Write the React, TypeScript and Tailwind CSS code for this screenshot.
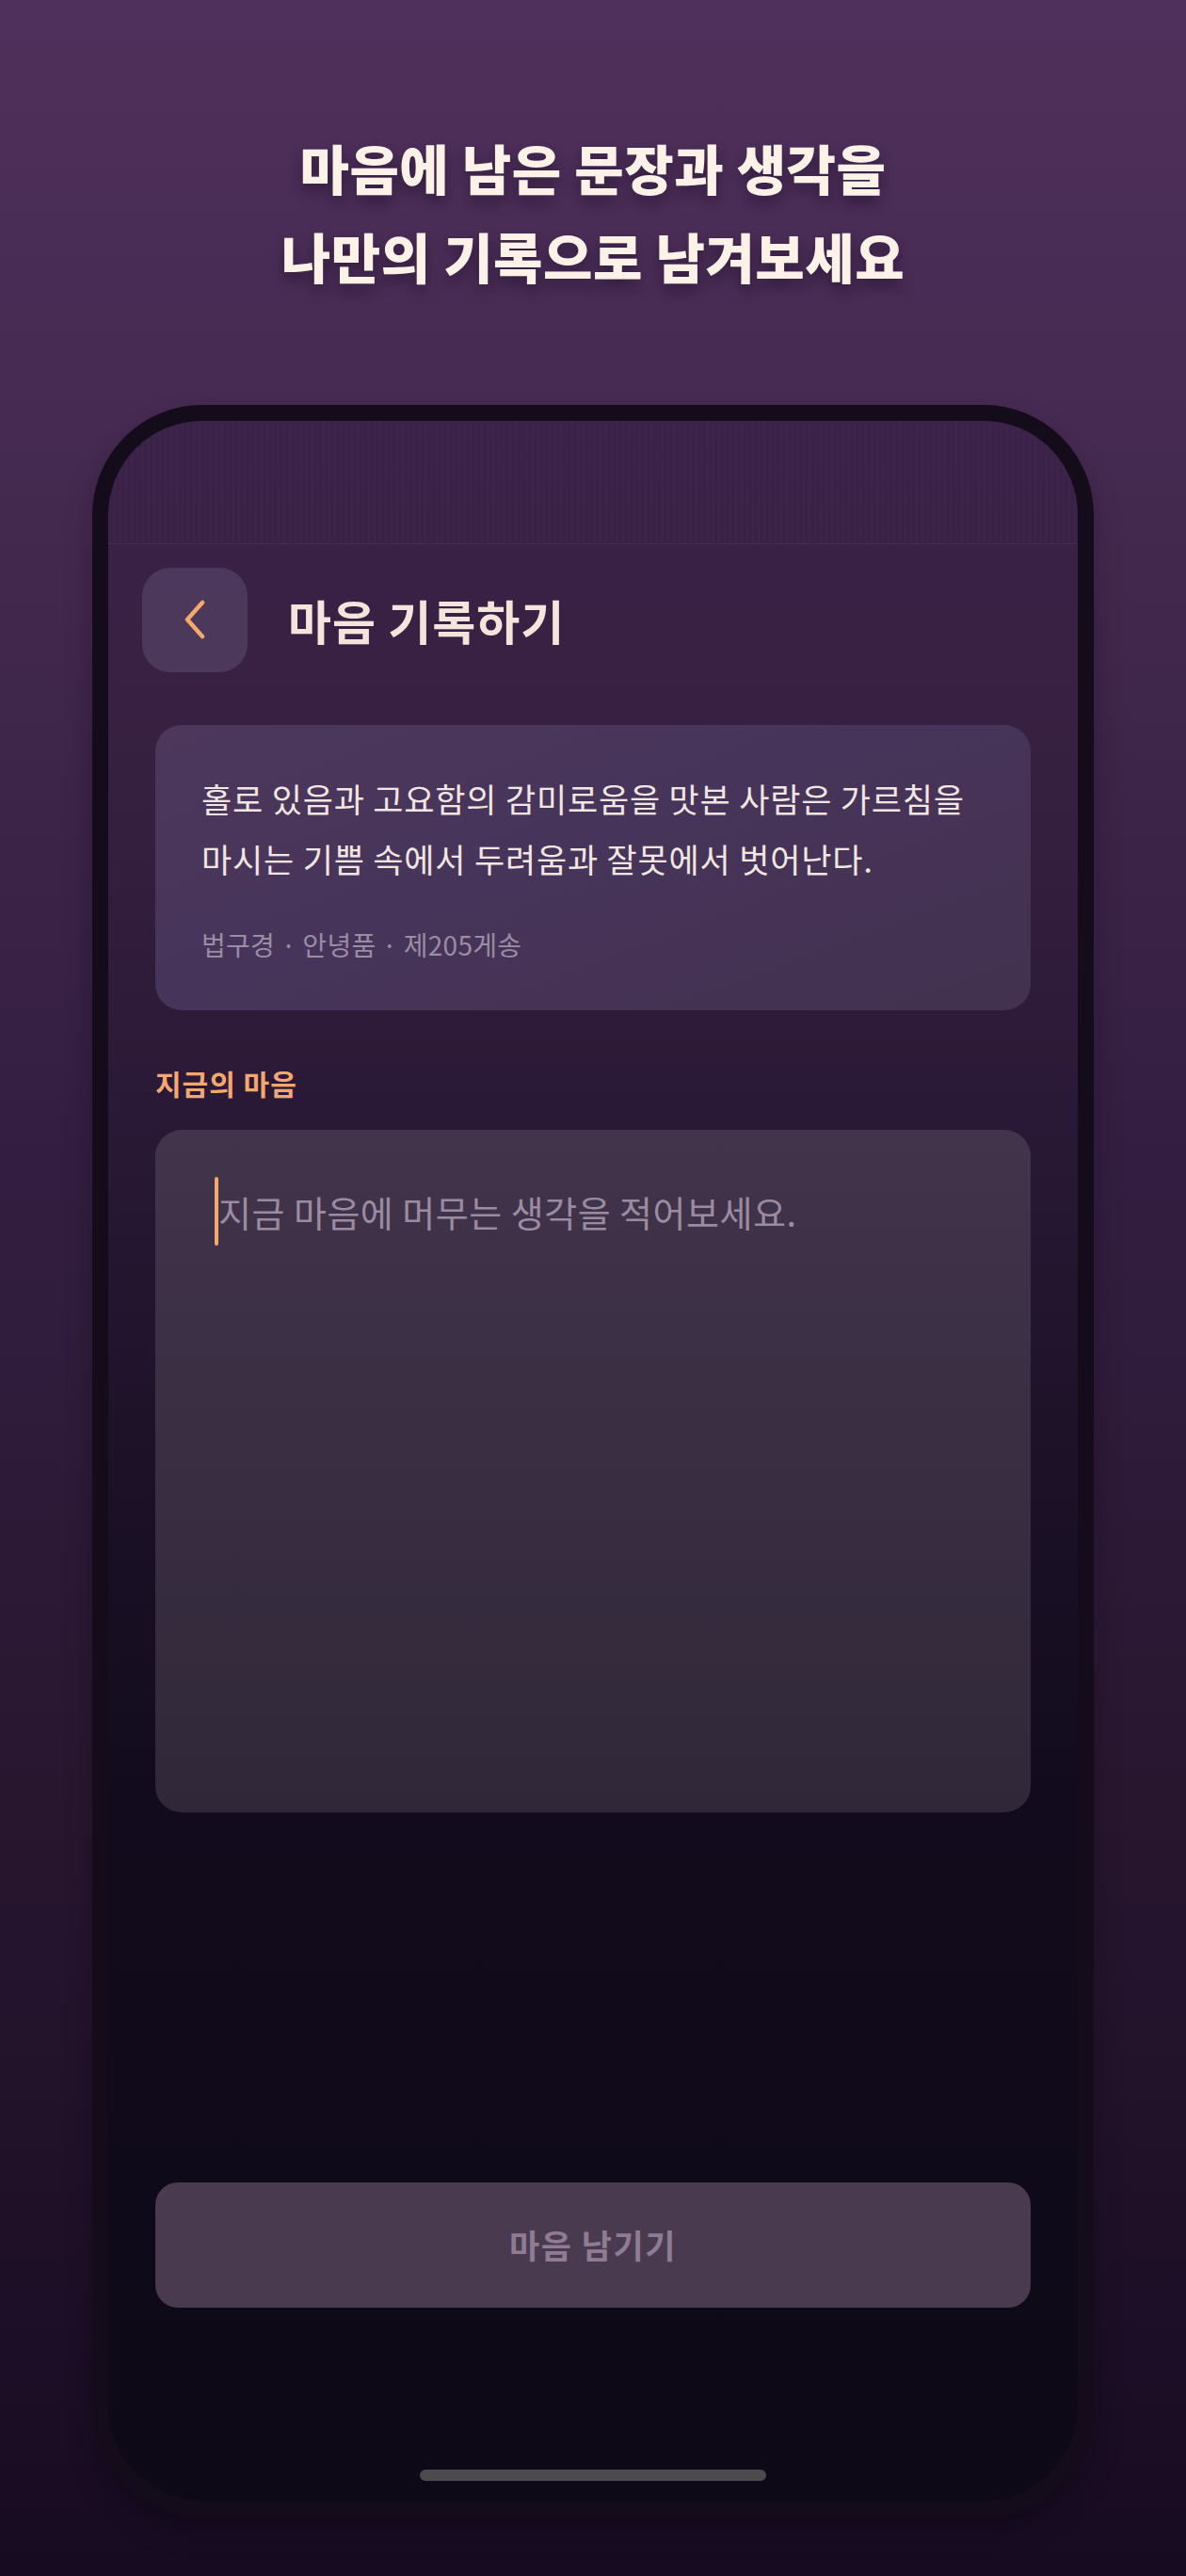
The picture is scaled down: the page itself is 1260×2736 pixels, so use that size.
import React from 'react';

const KR = 'font-["Noto_Sans_CJK_KR","Noto_Sans",sans-serif]';

const BackButton = () => (
  <button
    className="w-[112px] h-[111px] rounded-[30px] bg-[#4f3b5e]/90 flex items-center justify-center shrink-0"
    aria-label="뒤로"
  >
    <svg width="26" height="42" viewBox="0 0 26 42" fill="none">
      <path d="M21 3L5 21L21 39" stroke="#f5a86c" strokeWidth="4.5" strokeLinecap="round" strokeLinejoin="round" />
    </svg>
  </button>
);

export default function App() {
  return (
    <div
      className={`${KR} w-full min-h-[2736px] flex flex-col items-center bg-[linear-gradient(180deg,#4f305c_0%,#44294f_20%,#331e41_45%,#28162f_70%,#170b22_100%)]`}
    >
      {/* Headline */}
      <h1 className="pt-[130px] text-center text-[57px] leading-[94px] font-black tracking-[0.5px] text-[#fdf1e8] [text-shadow:0_8px_14px_rgba(20,8,30,0.45)]">
        마음에 남은 문장과 생각을
        <br />
        나만의 기록으로 남겨보세요
      </h1>

      {/* Phone */}
      <div className="mt-[112px] w-[1064px] h-[2243px] rounded-[117px] bg-[#150c1b] p-[17px] shadow-[0_16px_30px_rgba(0,0,0,0.25)]">
        <div className="w-full h-full rounded-[100px] overflow-hidden flex flex-col bg-[linear-gradient(180deg,#3b2249_0%,#36203f_18%,#2a1936_33%,#1e1229_48%,#120b1d_66%,#0d0916_100%)]">
          {/* status bar area */}
          <div className="h-[131px] shrink-0 border-b border-[#4a3258]/60 bg-[repeating-linear-gradient(90deg,rgba(255,255,255,0.015)_0px,rgba(255,255,255,0.015)_2px,rgba(0,0,0,0.02)_3px,rgba(0,0,0,0)_6px)]" />

          {/* header */}
          <div className="mt-[24px] h-[112px] pl-[36px] flex items-center gap-[43px]">
            <BackButton />
            <h2 className="text-[50px] font-bold tracking-[1px] text-[#f4e5dc]">마음 기록하기</h2>
          </div>

          {/* quote card */}
          <div className="mx-[50px] mt-[56px] h-[303px] rounded-[28px] bg-[linear-gradient(160deg,#4d385c_0%,#47345a_45%,#43314f_100%)] pl-[49px] pr-[30px] pt-[46px]">
            <p className="text-[35px] leading-[64px] tracking-[0.8px] whitespace-nowrap text-[#f2e6e2]">
              홀로 있음과 고요함의 감미로움을 맛본 사람은 가르침을
              <br />
              마시는 기쁨 속에서 두려움과 잘못에서 벗어난다.
            </p>
            <p className="mt-[39px] text-[28px] leading-[40px] tracking-[0.3px] text-[#9c8ca6]">
              법구경 · 안녕품 · 제205게송
            </p>
          </div>

          {/* label */}
          <div className="mx-[50px] mt-[57px] h-[40px] text-[30px] leading-[40px] font-bold tracking-[1px] text-[#f4a86e]">
            지금의 마음
          </div>

          {/* textarea */}
          <div className="mx-[50px] mt-[30px] h-[725px] rounded-[28px] bg-[linear-gradient(180deg,#41344b_0%,#3a2e43_45%,#302838_100%)] pl-[63px] pt-[50px]">
            <div className="flex items-center h-[73px]">
              <span className="w-[4px] h-[73px] rounded-full bg-[#f5a86c]" />
              <span className="text-[38px] leading-[73px] tracking-[0.5px] text-[#9b8ba1]">
                지금 마음에 머무는 생각을 적어보세요.
              </span>
            </div>
          </div>

          {/* submit */}
          <button className="mx-[50px] mt-[393px] h-[133px] rounded-[24px] bg-[#4a3a4f] text-[35px] font-bold tracking-[1.5px] text-[#8f7b93]">
            마음 남기기
          </button>

          {/* home indicator */}
          <div className="mt-[172px] mb-[21px] self-center w-[368px] h-[12px] rounded-full bg-[#4b4a4d]" />
        </div>
      </div>
    </div>
  );
}
